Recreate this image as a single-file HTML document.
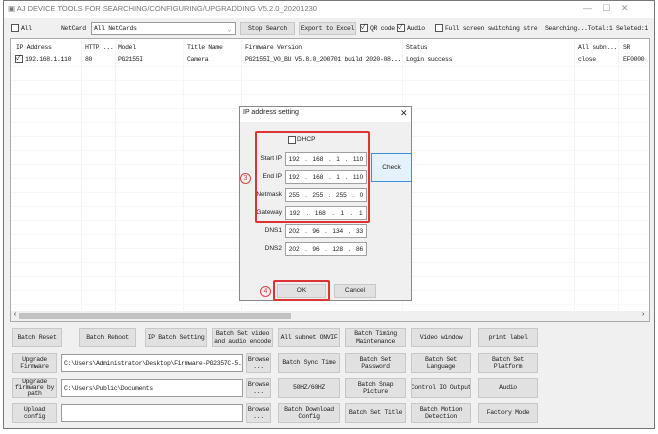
<!DOCTYPE html><html><head><style>
*{margin:0;padding:0;box-sizing:border-box}
body{width:658px;height:434px;background:#fff;position:relative;overflow:hidden;font-family:"Liberation Mono","Noto Sans CJK SC",monospace;font-size:6.5px;letter-spacing:-0.35px;color:#222}
.a{position:absolute;white-space:nowrap}
.btn{position:absolute;background:#e1e1e1;border:1px solid #c8c8c8;display:flex;align-items:center;justify-content:center;text-align:center;line-height:7.5px;font-size:6.5px;white-space:nowrap;overflow:hidden}
.in{position:absolute;background:#fff;border:1px solid #9a9a9a;font-size:6.5px;padding-left:2px;display:flex;align-items:center;white-space:nowrap;overflow:hidden}
.cb{position:absolute;width:8px;height:8px;border:1px solid #555;background:#fff;letter-spacing:0}
.vl{position:absolute;top:40px;width:1px;height:272px;background:#f4f4f4}
.hl{position:absolute;left:11px;width:637px;height:1px;background:#f7f7f7}
.ds{font-family:"Liberation Sans",sans-serif;font-size:6.5px;letter-spacing:0}
.ip{position:absolute;background:#fff;border:1px solid #a0a0a0;font-family:"Liberation Sans",sans-serif;font-size:6.5px;letter-spacing:0;display:flex;align-items:center;justify-content:space-around;width:82px;height:14px;left:285px}
.lb{position:absolute;font-family:"Liberation Sans",sans-serif;font-size:6.5px;letter-spacing:0;text-align:right;width:40px;left:242px}
</style></head><body>
<div class="a" style="left:3px;top:0;width:652px;height:429px;background:#f0f0f0;border:1px solid #777"></div>
<div class="a" style="left:4px;top:1px;width:650px;height:17px;background:#fff"></div>
<div class="a" style="left:8px;top:4px;font-family:'Liberation Sans',sans-serif;font-size:7.5px;letter-spacing:0;color:#777">&#9635; AJ DEVICE TOOLS FOR SEARCHING/CONFIGURING/UPGRADDING V5.2.0_20201230</div>
<div class="a" style="left:583px;top:3px;font-size:9px;color:#999;font-family:'Liberation Sans'">—&nbsp;&nbsp;&nbsp;&nbsp;&nbsp;☐&nbsp;&nbsp;&nbsp;&nbsp;&nbsp;✕</div>
<div class="cb" style="left:11px;top:24px"></div><div class="a" style="left:21px;top:25px">All</div>
<div class="a" style="left:61px;top:25px">NetCard</div>
<div class="in" style="left:91px;top:22px;width:145px;height:13px;background:#fff">All NetCards<span style="position:absolute;right:4px;color:#888">⌄</span></div>
<div class="btn" style="left:240px;top:22px;width:55px;height:13px">Stop Search</div>
<div class="btn" style="left:299px;top:22px;width:57px;height:13px">Export to Excel</div>
<div class="cb" style="left:360px;top:24px;font-size:7px;line-height:6px">✓</div><div class="a" style="left:370px;top:25px">QR code</div>
<div class="cb" style="left:397px;top:24px;font-size:7px;line-height:6px">✓</div><div class="a" style="left:407px;top:25px">Audio</div>
<div class="cb" style="left:435px;top:24px"></div><div class="a" style="left:445px;top:25px;width:94px;overflow:hidden">Full screen switching stre:</div>
<div class="a" style="left:545px;top:25px">Searching...Total:1 Seleted:1</div>
<div class="a" style="left:10px;top:38px;width:640px;height:284px;background:#fff;border:1px solid #aaa"></div>
<div class="vl" style="left:81px"></div><div class="vl" style="left:115px"></div><div class="vl" style="left:183px"></div><div class="vl" style="left:241px"></div><div class="vl" style="left:402px"></div><div class="vl" style="left:574px"></div><div class="vl" style="left:618px"></div>
<div class="hl" style="top:66px"></div><div class="hl" style="top:80px"></div><div class="hl" style="top:94px"></div><div class="hl" style="top:108px"></div><div class="hl" style="top:122px"></div><div class="hl" style="top:136px"></div><div class="hl" style="top:150px"></div><div class="hl" style="top:164px"></div><div class="hl" style="top:178px"></div><div class="hl" style="top:192px"></div><div class="hl" style="top:206px"></div><div class="hl" style="top:220px"></div><div class="hl" style="top:234px"></div><div class="hl" style="top:248px"></div><div class="hl" style="top:262px"></div><div class="hl" style="top:276px"></div><div class="hl" style="top:290px"></div><div class="hl" style="top:304px"></div>
<div class="a" style="left:16px;top:44px">IP Address</div><div class="a" style="left:85px;top:44px">HTTP ...</div><div class="a" style="left:118px;top:44px">Model</div><div class="a" style="left:187px;top:44px">Title Name</div><div class="a" style="left:245px;top:44px">Firmware Version</div><div class="a" style="left:406px;top:44px">Status</div><div class="a" style="left:578px;top:44px">All subn...</div><div class="a" style="left:623px;top:44px">SR</div>
<div class="cb" style="left:15px;top:55px;font-size:7px;line-height:6px">✓</div><div class="a" style="left:25px;top:56px">192.168.1.110</div><div class="a" style="left:85px;top:56px">80</div><div class="a" style="left:118px;top:56px">PG2155I</div><div class="a" style="left:187px;top:56px">Camera</div><div class="a" style="left:245px;top:56px">PG2155I_V0_BU V5.8.0_200701 build 2020-08...</div><div class="a" style="left:406px;top:56px">Login success</div><div class="a" style="left:578px;top:56px">close</div><div class="a" style="left:623px;top:56px;width:26px;overflow:hidden">EF0000</div>
<div class="a" style="left:11px;top:311px;width:638px;height:10px;background:#f0f0f0"></div>
<div class="a" style="left:19px;top:313px;width:272px;height:6px;background:#c2c2c2"></div>
<div class="a" style="left:13px;top:311px;font-size:7px">‹</div><div class="a" style="left:641px;top:311px;font-size:7px">›</div>
<!-- dialog -->
<div class="a" style="left:239px;top:106px;width:173px;height:195px;background:#f0f0f0;border:1px solid #888"></div>
<div class="a" style="left:240px;top:107px;width:171px;height:15px;background:#fff"></div>
<div class="a ds" style="left:243px;top:109px;font-size:7px">IP address setting</div>
<div class="a ds" style="left:400px;top:108px;font-size:9px">✕</div>
<div class="cb" style="left:288px;top:136px"></div><div class="a ds" style="left:297px;top:136px">DHCP</div>
<div class="lb" style="top:155px">Start IP</div><div class="ip" style="top:152px"><span>192</span>.<span>168</span>.<span>1</span>.<span>110</span></div>
<div class="lb" style="top:173px">End IP</div><div class="ip" style="top:170px"><span>192</span>.<span>168</span>.<span>1</span>.<span>110</span></div>
<div class="lb" style="top:191px">Netmask</div><div class="ip" style="top:188px"><span>255</span>.<span>255</span>.<span>255</span>.<span>0</span></div>
<div class="lb" style="top:209px">Gateway</div><div class="ip" style="top:206px"><span>192</span>.<span>168</span>.<span>1</span>.<span>1</span></div>
<div class="lb" style="top:227px">DNS1</div><div class="ip" style="top:224px"><span>202</span>.<span>96</span>.<span>134</span>.<span>33</span></div>
<div class="lb" style="top:245px">DNS2</div><div class="ip" style="top:242px"><span>202</span>.<span>96</span>.<span>128</span>.<span>86</span></div>
<div class="a" style="left:255px;top:131px;width:115px;height:92px;border:2px solid #d33;border-radius:2px"></div>
<div class="btn ds" style="left:371px;top:153px;width:41px;height:29px;background:#e5f1fb;border-color:#3c8fd6">Check</div>
<div class="a ds" style="left:240px;top:173px;width:11px;height:11px;border:1px solid #d44;border-radius:50%;color:#d44;text-align:center;line-height:10px;font-size:7px">3</div>
<div class="btn ds" style="left:277px;top:284px;width:49px;height:14px">OK</div>
<div class="a" style="left:273px;top:280px;width:57px;height:21px;border:2px solid #d33;border-radius:2px"></div>
<div class="btn ds" style="left:334px;top:284px;width:42px;height:14px">Cancel</div>
<div class="a ds" style="left:260px;top:286px;width:11px;height:11px;border:1px solid #d44;border-radius:50%;color:#d44;text-align:center;line-height:10px;font-size:7px">4</div>
<!-- bottom buttons -->
<div class="btn" style="left:12px;top:328px;width:50px;height:19px">Batch Reset</div>
<div class="btn" style="left:79px;top:328px;width:57px;height:19px">Batch Reboot</div>
<div class="btn" style="left:145px;top:328px;width:62px;height:19px">IP Batch Setting</div>
<div class="btn" style="left:212px;top:328px;width:61px;height:19px">Batch Set video<br>and audio encode</div>
<div class="btn" style="left:278px;top:328px;width:62px;height:19px">All subnet ONVIF</div>
<div class="btn" style="left:345px;top:328px;width:61px;height:19px">Batch Timing<br>Maintenance</div>
<div class="btn" style="left:411px;top:328px;width:60px;height:19px">Video window</div>
<div class="btn" style="left:478px;top:328px;width:60px;height:19px">print label</div>

<div class="btn" style="left:12px;top:353px;width:45px;height:20px">Upgrade<br>Firmware</div>
<div class="in" style="left:61px;top:354px;width:182px;height:18px">C:\Users\Administrator\Desktop\Firmware-PG2357C-5.8.</div>
<div class="btn" style="left:246px;top:353px;width:25px;height:20px">Browse<br>...</div>
<div class="btn" style="left:278px;top:353px;width:62px;height:20px">Batch Sync Time</div>
<div class="btn" style="left:345px;top:353px;width:61px;height:20px">Batch Set<br>Password</div>
<div class="btn" style="left:411px;top:353px;width:60px;height:20px">Batch Set<br>Language</div>
<div class="btn" style="left:478px;top:353px;width:60px;height:20px">Batch Set<br>Platform</div>

<div class="btn" style="left:12px;top:378px;width:45px;height:20px;line-height:6px">Upgrade<br>firmware by<br>path</div>
<div class="in" style="left:61px;top:379px;width:182px;height:18px">C:\Users\Public\Documents</div>
<div class="btn" style="left:246px;top:378px;width:25px;height:20px">Browse<br>...</div>
<div class="btn" style="left:278px;top:378px;width:62px;height:20px">50HZ/60HZ</div>
<div class="btn" style="left:345px;top:378px;width:61px;height:20px">Batch Snap<br>Picture</div>
<div class="btn" style="left:411px;top:378px;width:60px;height:20px">Control IO Output</div>
<div class="btn" style="left:478px;top:378px;width:60px;height:20px">Audio</div>

<div class="btn" style="left:12px;top:403px;width:45px;height:20px">Upload<br>config</div>
<div class="in" style="left:61px;top:404px;width:182px;height:18px"></div>
<div class="btn" style="left:246px;top:403px;width:25px;height:20px">Browse<br>...</div>
<div class="btn" style="left:278px;top:403px;width:62px;height:20px">Batch Download<br>Config</div>
<div class="btn" style="left:345px;top:403px;width:61px;height:20px">Batch Set Title</div>
<div class="btn" style="left:411px;top:403px;width:60px;height:20px">Batch Motion<br>Detection</div>
<div class="btn" style="left:478px;top:403px;width:60px;height:20px">Factory Mode</div>
</body></html>
